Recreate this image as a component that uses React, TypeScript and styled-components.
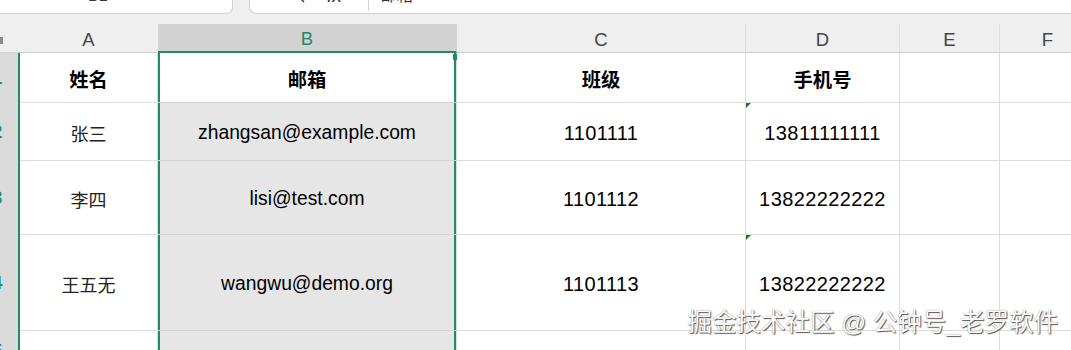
import styled, { createGlobalStyle } from "styled-components";

const GREEN = "#1f8b6b";
const GRID = "#dcdcdc";

const GlobalStyle = createGlobalStyle`
  html, body {
    margin: 0;
    padding: 0;
    background: #fff;
  }
  body {
    font-family: "Liberation Sans", Arial, "Noto Sans CJK SC", sans-serif;
    overflow: hidden;
  }
`;

const Window = styled.div`
  position: relative;
  width: 1071px;
  height: 350px;
  overflow: hidden;
  background: #fff;
`;

/* name box + formula bar, scrolled so only their lower edge shows */
const Toolbar = styled.div`
  display: flex;
  height: 24px;
  background: #efefef;
`;

const NameBox = styled.div`
  display: flex;
  align-items: flex-end;
  box-sizing: border-box;
  width: 233px;
  height: 14px;
  padding-left: 88px;
  background: #fff;
  border-right: 1px solid #cfcfcf;
  border-bottom: 1px solid #cfcfcf;
  border-radius: 0 0 7px 0;
  overflow: hidden;
`;

const FormulaBar = styled.div`
  display: flex;
  align-items: flex-end;
  flex: 1;
  box-sizing: border-box;
  height: 14px;
  margin-left: 16px;
  padding-left: 39px;
  background: #fff;
  border-left: 1px solid #cfcfcf;
  border-bottom: 1px solid #cfcfcf;
  border-radius: 0 0 0 7px;
  overflow: hidden;
`;

const BarText = styled.span<{ $gap?: number; $italic?: boolean }>`
  margin-bottom: 8px;
  margin-left: ${(p) => p.$gap ?? 0}px;
  font-size: ${(p) => (p.$italic ? 19 : 16)}px;
  line-height: 18px;
  color: #333;
  font-style: ${(p) => (p.$italic ? "italic" : "normal")};
  white-space: nowrap;
`;

const SearchIcon = styled.svg`
  flex: none;
  margin-bottom: 10px;
`;

const Divider = styled.span`
  flex: none;
  width: 1px;
  height: 20px;
  margin: 0 0 2px 26px;
  background: #d0d0d0;
`;

/* the grid itself; the row header column is partly scrolled out on the left */
const Sheet = styled.div`
  display: grid;
  grid-template-columns: 44px 138px 299px 289px 154px 100px 96px;
  grid-template-rows: 29px 50px 58px 74px 96px 40px;
  margin-left: -24px;
`;

const Corner = styled.div`
  position: relative;
  background: #efefef;
  border-bottom: 1px solid #d0d0d0;

  &::after {
    content: "";
    position: absolute;
    left: 20px;
    top: 13px;
    width: 7px;
    height: 7px;
    background: #8c8c8c;
  }
`;

const ColHead = styled.div<{ $sel?: boolean; $line?: boolean }>`
  display: flex;
  align-items: center;
  justify-content: center;
  box-sizing: border-box;
  padding-top: 3px;
  font-size: 18.5px;
  color: ${(p) => (p.$sel ? GREEN : "#444")};
  background: ${(p) => (p.$sel ? "#d2d2d2" : "#efefef")};
  border-bottom: ${(p) => (p.$sel ? `2px solid ${GREEN}` : "1px solid #d0d0d0")};
  border-right: 1px solid ${(p) => (p.$line ? "#dedede" : "transparent")};
`;

const RowHead = styled.div`
  display: flex;
  align-items: center;
  justify-content: center;
  box-sizing: border-box;
  font-size: 19px;
  font-weight: 700;
  color: ${GREEN};
  background: #dadada;
  border-right: 2px solid ${GREEN};
`;

const Cell = styled.div<{ $sel?: boolean; $active?: boolean; $head?: boolean; $flag?: boolean; $num?: boolean }>`
  position: relative;
  display: flex;
  align-items: center;
  justify-content: center;
  box-sizing: border-box;
  padding-top: 3px;
  font-size: ${(p) => (p.$num ? 20 : 19.3)}px;
  font-weight: ${(p) => (p.$head ? 700 : 400)};
  letter-spacing: ${(p) => (p.$num ? "0.4px" : "0")};
  color: #000;
  white-space: nowrap;
  background: ${(p) => (p.$sel && !p.$active ? "#e6e6e6" : "#fff")};
  border-right: 1px solid ${GRID};
  border-bottom: 1px solid ${(p) => (p.$sel ? "#d2d2d2" : GRID)};
  box-shadow: ${(p) =>
    p.$sel ? `inset 2px 0 0 ${GREEN}, inset -2px 0 0 ${GREEN}` : "none"};

  &::before {
    content: "";
    display: ${(p) => (p.$flag ? "block" : "none")};
    position: absolute;
    left: 0;
    top: 0;
    border-top: 5px solid #1b7d1b;
    border-right: 5px solid transparent;
  }
`;

const Name = styled.span`
  font-family: "Noto Sans CJK SC", sans-serif;
  font-size: 18px;
  color: #222;
`;

const FillHandle = styled.span`
  position: absolute;
  right: -2px;
  top: 1px;
  width: 5px;
  height: 6px;
  background: ${GREEN};
`;

const Watermark = styled.div`
  position: absolute;
  right: 13px;
  bottom: 12px;
  font-family: "Liberation Sans", "Noto Sans CJK SC", sans-serif;
  font-size: 24.5px;
  line-height: 30px;
  color: #fdfdfd;
  text-shadow: 1px 1px 1px #555, 0 0 1px #777;
  white-space: nowrap;
`;

const columns = ["A", "B", "C", "D", "E", "F"];

const rows = [
  { name: "张三", mail: "zhangsan@example.com", cls: "1101111", phone: "13811111111", flag: true },
  { name: "李四", mail: "lisi@test.com", cls: "1101112", phone: "13822222222", flag: false },
  { name: "王五无", mail: "wangwu@demo.org", cls: "1101113", phone: "13822222222", flag: true },
];

export default function App() {
  return (
    <Window>
      <GlobalStyle />
      <Toolbar>
        <NameBox>
          <BarText>B1</BarText>
        </NameBox>
        <FormulaBar>
          <SearchIcon width="16" height="16" viewBox="0 0 16 16" fill="none" stroke="#444" strokeWidth="1.6">
            <circle cx="6.5" cy="6.5" r="5" />
            <path d="M10.2 10.2 15 15" />
          </SearchIcon>
          <BarText $gap={22} $italic>
            fx
          </BarText>
          <Divider />
          <BarText $gap={12}>邮箱</BarText>
        </FormulaBar>
      </Toolbar>

      <Sheet>
        <Corner />
        {columns.map((c, i) => (
          <ColHead key={c} $sel={c === "B"} $line={i >= 2}>
            {c}
          </ColHead>
        ))}

        {/* row 1: titles */}
        <RowHead>1</RowHead>
        <Cell $head>姓名</Cell>
        <Cell $head $sel $active>
          邮箱
          <FillHandle />
        </Cell>
        <Cell $head>班级</Cell>
        <Cell $head>手机号</Cell>
        <Cell />
        <Cell />

        {rows.map((r, i) => (
          <>
            <RowHead key={`h${i}`}>{i + 2}</RowHead>
            <Cell key={`a${i}`}>
              <Name>{r.name}</Name>
            </Cell>
            <Cell key={`b${i}`} $sel>
              {r.mail}
            </Cell>
            <Cell key={`c${i}`} $num>
              {r.cls}
            </Cell>
            <Cell key={`d${i}`} $num $flag={r.flag}>
              {r.phone}
            </Cell>
            <Cell key={`e${i}`} />
            <Cell key={`f${i}`} />
          </>
        ))}

        <RowHead>5</RowHead>
        <Cell />
        <Cell $sel />
        <Cell />
        <Cell />
        <Cell />
        <Cell />
      </Sheet>

      <Watermark>掘金技术社区 @ 公钟号_老罗软件</Watermark>
    </Window>
  );
}
